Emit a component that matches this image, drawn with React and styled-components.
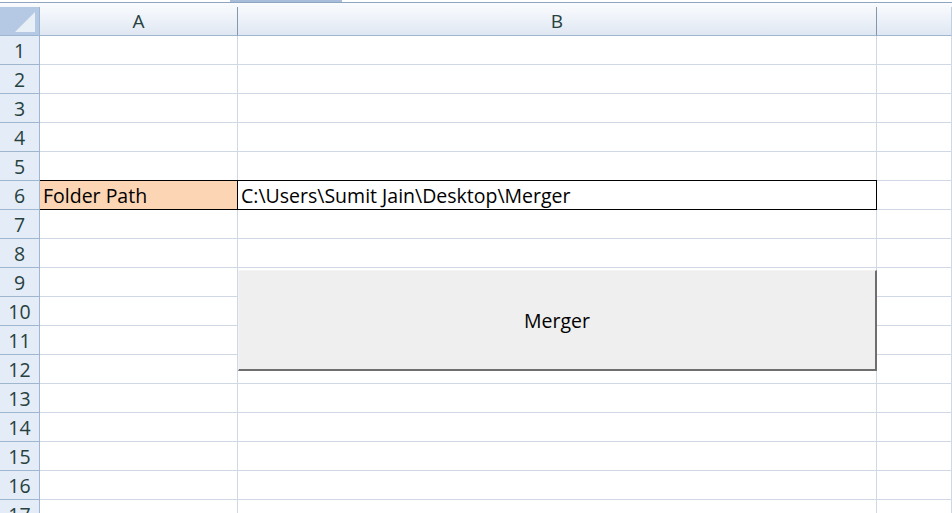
import React from 'react';
import styled, { createGlobalStyle } from 'styled-components';

const GlobalStyle = createGlobalStyle`
  html, body {
    margin: 0;
    padding: 0;
    background: #ffffff;
    overflow: hidden;
  }
  body {
    font-family: "Open Sans", Lato, "Liberation Sans", sans-serif;
  }
`;

const Window = styled.div`
  width: 952px;
  height: 513px;
  overflow: hidden;
  position: relative;
  background: #ffffff;
`;

const TopStrip = styled.div`
  height: 2px;
  background: #ffffff;
  border-bottom: 1px solid #8fa4bf;
  position: relative;
`;

const SheetTab = styled.div`
  position: absolute;
  left: 230px;
  top: 0;
  width: 112px;
  height: 2px;
  background: #a7bdd9;
`;

const Gap = styled.div`
  height: 4px;
  background: linear-gradient(#fbfcfe, #f4f7fb);
`;

const Grid = styled.div`
  display: grid;
  grid-template-columns: 40px 198px 639px 1fr;
  grid-auto-rows: 29px;
  font-size: 19.5px;
`;

const CornerCell = styled.div`
  background: #b5c9e4;
  border-right: 1px solid #9eb6ce;
  border-bottom: 1px solid #9eb6ce;
  box-sizing: border-box;
  height: 29px;
  display: flex;
  align-items: flex-end;
  justify-content: flex-end;
  padding: 0 4px 3px 0;
`;

const ColHead = styled.div`
  box-sizing: border-box;
  height: 29px;
  background: linear-gradient(#f7f9fc 0%, #edf2f9 45%, #dfe7f2 100%);
  border-right: 1px solid ${(p) => (p.$dark ? '#8397b1' : '#c2cfdf')};
  border-bottom: 1px solid #9eb6ce;
  display: flex;
  align-items: center;
  justify-content: center;
  color: #27413e;
  font-size: 19px;
`;

const RowHead = styled.div`
  box-sizing: border-box;
  background: #e4ecf7;
  border-right: 1px solid #9eb6ce;
  border-bottom: 1px solid #9eb6ce;
  display: flex;
  align-items: center;
  justify-content: center;
  color: #27413e;
  font-size: 19.5px;
  padding-top: 1px;
`;

const Cell = styled.div`
  box-sizing: border-box;
  border-right: 1px solid #d0d7e5;
  border-bottom: 1px solid #d0d7e5;
  display: flex;
  align-items: center;
  padding: 1px 0 0 3px;
  color: #000000;
  font-size: 19.5px;
  white-space: nowrap;
  background: ${(p) => p.$fill || '#ffffff'};
  ${(p) =>
    p.$boxed &&
    `
    border-top: 1px solid #000000;
    border-bottom: 1px solid #000000;
    margin-top: -1px;
  `}
  ${(p) => p.$leftEdge && `border-left: 1px solid #000000; margin-left: -1px;`}
  ${(p) => p.$rightEdge && `border-right: 1px solid #000000;`}
`;

const MergeButton = styled.button`
  position: absolute;
  left: 238px;
  top: 270px;
  width: 639px;
  height: 101px;
  box-sizing: border-box;
  background: #efefef;
  border: none;
  border-top: 1px solid #f4f4f4;
  border-left: 1px solid #f4f4f4;
  border-right: 2px solid #6e6e6e;
  border-bottom: 2px solid #6e6e6e;
  font-family: "Open Sans", Lato, "Liberation Sans", sans-serif;
  font-size: 19.5px;
  color: #000000;
  padding: 0;
  cursor: pointer;
`;

const rows = Array.from({ length: 17 }, (_, i) => i + 1);

function CornerTriangle() {
  return (
    <svg width="20" height="20" viewBox="0 0 20 20">
      <polygon points="20,0 20,20 0,20" fill="#e9eff7" />
    </svg>
  );
}

function RowCells({ n }) {
  if (n === 6) {
    return (
      <>
        <Cell $fill="#fcd5b4" $boxed>Folder Path</Cell>
        <Cell $boxed $leftEdge $rightEdge>C:\Users\Sumit Jain\Desktop\Merger</Cell>
        <Cell />
      </>
    );
  }
  return (
    <>
      <Cell />
      <Cell />
      <Cell />
    </>
  );
}

export default function App() {
  return (
    <Window>
      <GlobalStyle />
      <TopStrip>
        <SheetTab />
      </TopStrip>
      <Gap />
      <Grid>
        <CornerCell>
          <CornerTriangle />
        </CornerCell>
        <ColHead $dark>A</ColHead>
        <ColHead $dark>B</ColHead>
        <ColHead />
        {rows.map((n) => (
          <React.Fragment key={n}>
            <RowHead>{n}</RowHead>
            <RowCells n={n} />
          </React.Fragment>
        ))}
      </Grid>
      <MergeButton>Merger</MergeButton>
    </Window>
  );
}
